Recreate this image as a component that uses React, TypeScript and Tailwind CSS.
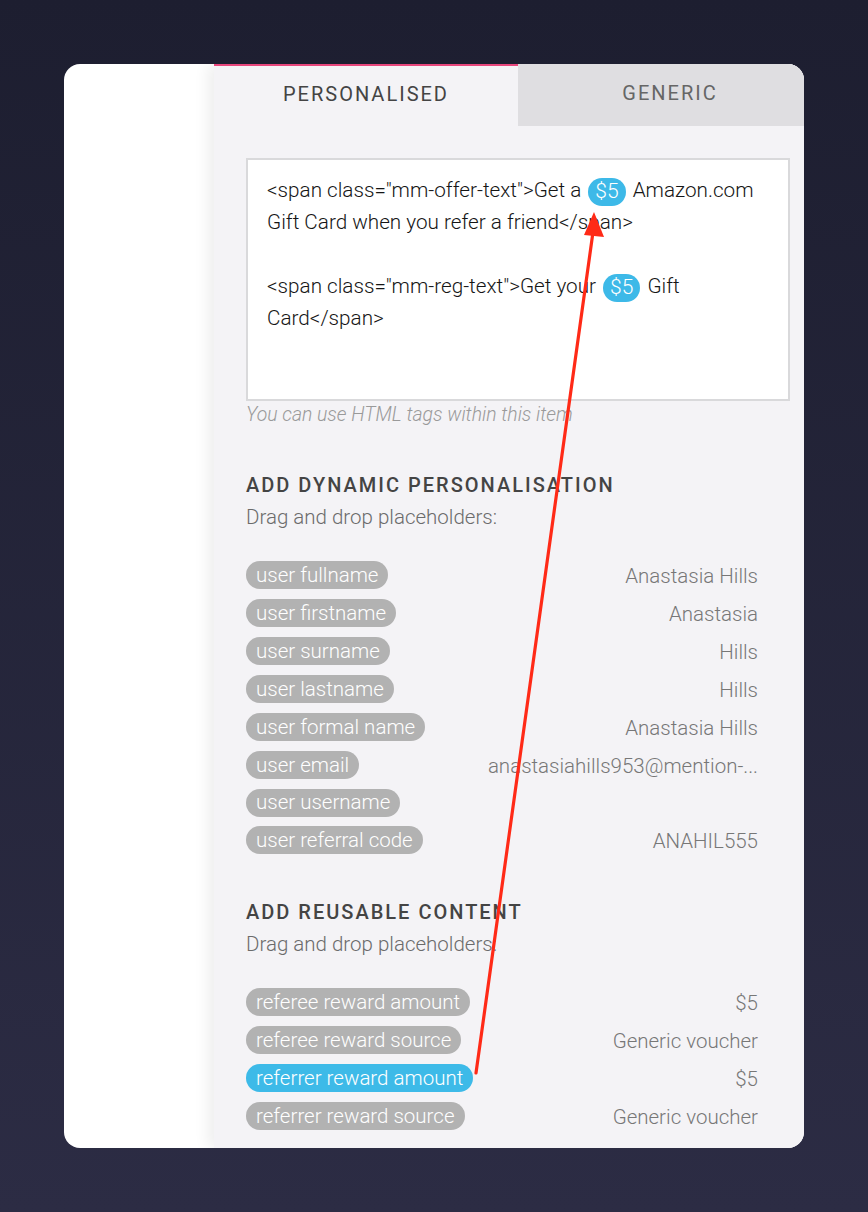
import React from 'react'

const dynamicRows: { label: string; value?: string; short?: boolean }[] = [
  { label: 'user fullname', value: 'Anastasia Hills' },
  { label: 'user firstname', value: 'Anastasia' },
  { label: 'user surname', value: 'Hills' },
  { label: 'user lastname', value: 'Hills' },
  { label: 'user formal name', value: 'Anastasia Hills' },
  { label: 'user email', value: 'anastasiahills953@mention-...' },
  { label: 'user username', short: true },
  { label: 'user referral code', value: 'ANAHIL555' },
]

const reusableRows: { label: string; value: string; active?: boolean }[] = [
  { label: 'referee reward amount', value: '$5' },
  { label: 'referee reward source', value: 'Generic voucher' },
  { label: 'referrer reward amount', value: '$5', active: true },
  { label: 'referrer reward source', value: 'Generic voucher' },
]

function Chip({ children, active }: { children: React.ReactNode; active?: boolean }) {
  return (
    <span
      className={
        'inline-flex h-[28px] items-center rounded-full px-[10px] text-[20.5px] font-light leading-none text-white ' +
        (active ? 'bg-[#3dbae8]' : 'bg-[#b2b2b2]')
      }
    >
      {children}
    </span>
  )
}

function Money() {
  return (
    <span className="mx-[2px] inline-flex h-[28px] items-center rounded-full bg-[#3db9e8] px-[7px] align-middle text-[21px] leading-none text-white">
      $5
    </span>
  )
}

function Section({ title }: { title: string }) {
  return (
    <div>
      <p className="text-[20px] font-medium leading-[24px] tracking-[2px] text-[#444]">{title}</p>
      <p className="mt-[8px] text-[20.5px] font-light leading-[24px] text-[#6b6b6b]">Drag and drop placeholders:</p>
    </div>
  )
}

export default function App() {
  return (
    <div
      className="relative min-h-[1212px] w-full bg-gradient-to-b from-[#1d1e30] to-[#2c2c44] pl-16 pt-16"
      style={{ fontFamily: 'Roboto, "Noto Sans", sans-serif' }}
    >
      <div className="flex h-[1084px] w-[740px] overflow-hidden rounded-2xl bg-white">
        <div className="w-[150px] shrink-0" />
        <div className="flex-1 bg-[#f4f3f6] shadow-[-6px_0_14px_rgba(0,0,0,0.07)]">
          {/* tabs */}
          <div className="flex h-[62px]">
            <div className="flex w-[304px] items-center justify-center border-t-2 border-[#e8467c] pb-[4px] text-[20px] tracking-[2px] text-[#444]">
              PERSONALISED
            </div>
            <div className="flex flex-1 items-center justify-center bg-[#dfdee1] pb-[4px] pl-[18px] text-[20px] tracking-[2px] text-[#666]">
              GENERIC
            </div>
          </div>

          <div className="pl-8 pr-[14px]">
            {/* editor */}
            <div className="mt-8 h-[243px] border-2 border-[#d9d9db] bg-white px-[19px] pt-[14px] text-[20.7px] font-light leading-[32px] text-[#151515]">
              &lt;span class="mm-offer-text"&gt;Get a <Money /> Amazon.com
              <br />
              Gift Card when you refer a friend&lt;/span&gt;
              <br />
              <br />
              &lt;span class="mm-reg-text"&gt;Get your <Money /> Gift
              <br />
              Card&lt;/span&gt;
            </div>
            <p className="mt-[2px] text-[19.4px] font-light italic leading-[24px] text-[#9a9a9a]">
              You can use HTML tags within this item
            </p>

            <div className="mt-[46px] pr-8">
              <Section title="ADD DYNAMIC PERSONALISATION" />
              <div className="mt-[27px]">
                {dynamicRows.map((r) => (
                  <div
                    key={r.label}
                    className={'flex items-center justify-between ' + (r.short ? 'h-[37px]' : 'h-[38px]')}
                  >
                    <Chip>{r.label}</Chip>
                    {r.value && (
                      <span className="pt-[3px] text-[20.5px] font-light text-[#777]">{r.value}</span>
                    )}
                  </div>
                ))}
              </div>

              <div className="mt-[41px]">
                <Section title="ADD REUSABLE CONTENT" />
              </div>
              <div className="mt-[27px]">
                {reusableRows.map((r) => (
                  <div key={r.label} className="flex h-[38px] items-center justify-between">
                    <Chip active={r.active}>{r.label}</Chip>
                    <span className="pt-[3px] text-[20.5px] font-light text-[#777]">{r.value}</span>
                  </div>
                ))}
              </div>
            </div>
          </div>
        </div>
      </div>

      {/* annotation arrow */}
      <svg
        className="pointer-events-none absolute left-0 top-0"
        width="868"
        height="1212"
        viewBox="0 0 868 1212"
      >
        <line x1="476" y1="1073" x2="593" y2="232" stroke="#ff2a17" strokeWidth="3.2" strokeLinecap="round" />
        <polygon points="594,212 584,235 604,237" fill="#ff2a17" />
      </svg>
    </div>
  )
}
